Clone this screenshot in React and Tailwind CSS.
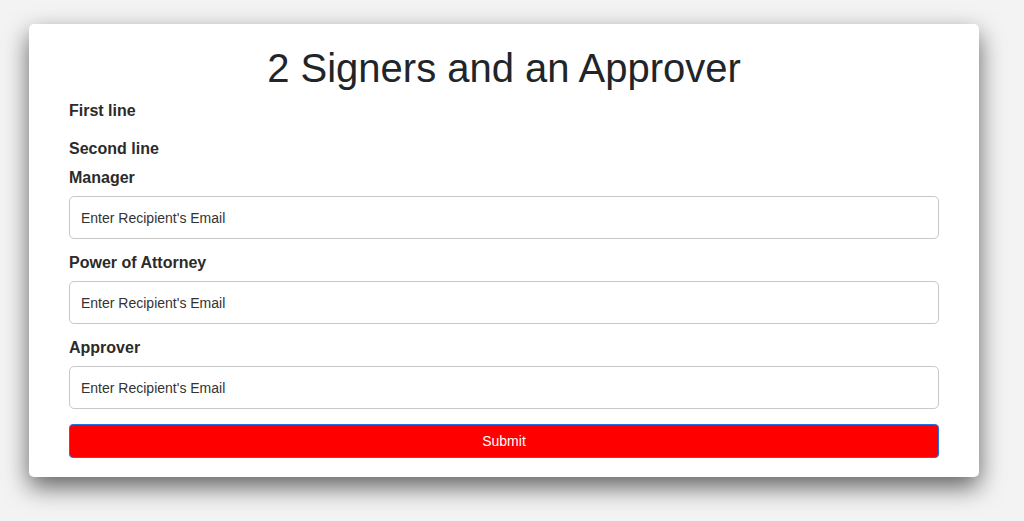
export default function App() {
  const fields = [
    { label: "Manager" },
    { label: "Power of Attorney" },
    { label: "Approver" },
  ];
  return (
    <div
      className="w-[1024px] h-[521px] bg-[#f3f3f3] pt-[24px] pl-[29px] overflow-hidden"
      style={{ fontFamily: '"Liberation Sans", Arial, Helvetica, sans-serif' }}
    >
      <div className="w-[950px] h-[453px] bg-white rounded-[5px] shadow-[0_10px_24px_rgba(0,0,0,0.6)] px-[40px] pt-[20px] text-[#212529]">
        <h1 className="text-[40px] leading-[48px] text-center font-normal">2 Signers and an Approver</h1>
        <div className="mt-[9px] text-[16px] leading-[20px] font-bold text-[#2b2b2b]">First line</div>
        <div className="mt-[18px] text-[16px] leading-[20px] font-bold text-[#2b2b2b]">Second line</div>
        {fields.map((f, i) => (
          <div key={i} className={i === 0 ? "mt-[9px]" : "mt-[14px]"}>
            <div className="text-[16px] leading-[20px] font-bold text-[#2b2b2b]">{f.label}</div>
            <input
              className="mt-[8px] block w-full h-[43px] border border-[#c8c8c8] rounded-[5px] px-[11px] text-[14px] text-[#333] placeholder:text-[#333] outline-none"
              placeholder="Enter Recipient's Email"
            />
          </div>
        ))}
        <button className="mt-[15px] block w-full h-[34px] bg-[#ff0000] border border-[#1a73e8] rounded-[4px] text-white text-[14px]">
          Submit
        </button>
      </div>
    </div>
  );
}
